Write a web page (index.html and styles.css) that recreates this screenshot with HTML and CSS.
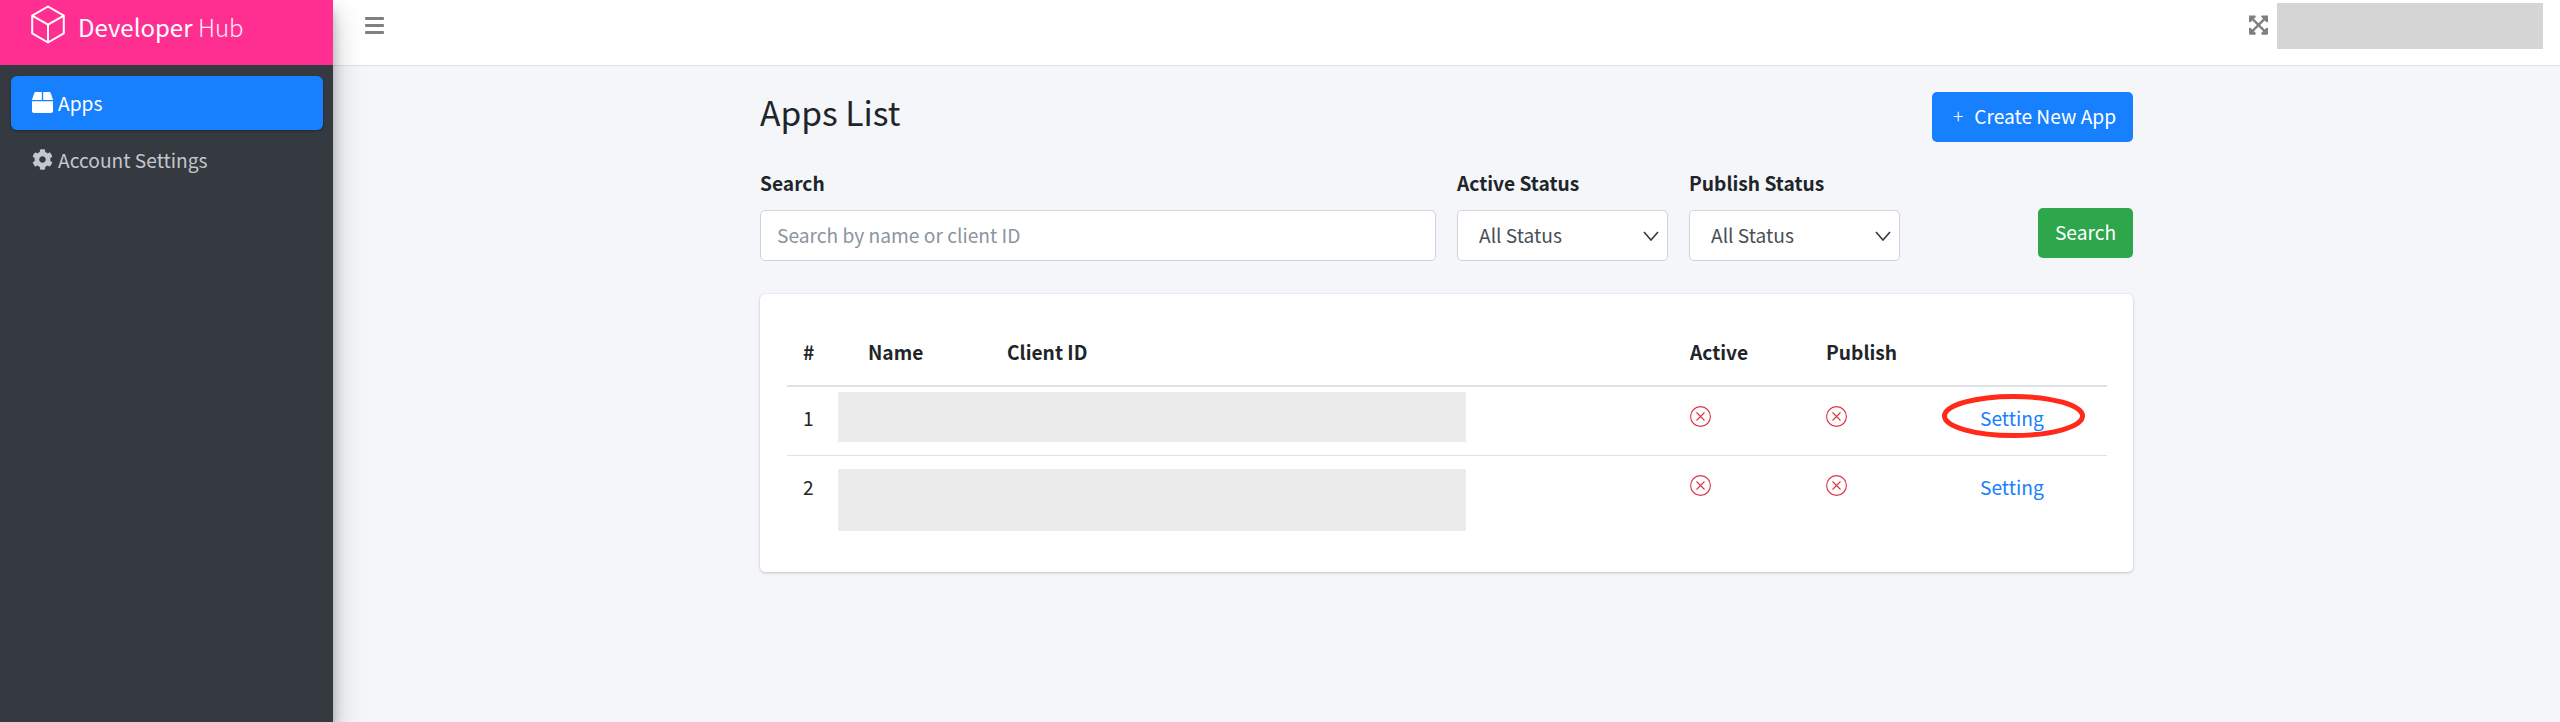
FILE: index.html
```html
<!DOCTYPE html>
<html lang="en">
<head>
<meta charset="utf-8">
<title>Developer Hub</title>
<link rel="stylesheet" href="styles.css">
</head>
<body>
<div class="app">
  <aside class="sidebar">
    <div class="brand">
      <svg class="brand-icon" viewBox="0 0 34 39" fill="none" stroke="#fff" stroke-width="2" stroke-linejoin="round"><path d="M17 1.5 32.8 10.6V28.4L17 37.5 1.2 28.4V10.6Z"/><path d="M1.2 10.6 17 19.6 32.8 10.6M17 19.6V37.5"/></svg>
      <span class="brand-text"><span class="brand-strong">Developer</span> <span class="brand-light">Hub</span></span>
    </div>
    <nav class="nav">
      <a class="nav-item active">
        <svg class="nav-icon" viewBox="0 0 512 512" fill="currentColor"><path d="M509.5 184.6L458.9 32.8C452.4 13.2 434.1 0 413.4 0H272v192h238.7c-.4-2.5-.4-5-1.2-7.4zM240 0H98.6c-20.7 0-39 13.2-45.5 32.8L2.5 184.6c-.8 2.4-.8 4.9-1.2 7.4H240V0zM0 224v240c0 26.5 21.5 48 48 48h416c26.5 0 48-21.5 48-48V224H0z"/></svg>
        <span>Apps</span>
      </a>
      <a class="nav-item">
        <svg class="nav-icon" viewBox="0 0 512 512" fill="currentColor"><path d="M487.4 315.7l-42.6-24.6c4.3-23.2 4.3-47 0-70.2l42.6-24.6c4.9-2.8 7.1-8.6 5.5-14-11.1-35.6-30-67.8-54.7-94.6-3.8-4.1-10-5.1-14.8-2.3L380.8 110c-17.9-15.4-38.5-27.3-60.8-35.1V25.8c0-5.6-3.9-10.5-9.4-11.7-36.7-8.2-74.3-7.8-109.2 0-5.5 1.2-9.4 6.1-9.4 11.7V75c-22.2 7.9-42.8 19.8-60.8 35.1L88.7 85.5c-4.9-2.8-11-1.9-14.8 2.3-24.7 26.7-43.6 58.9-54.7 94.6-1.7 5.4.6 11.2 5.5 14L67.3 221c-4.3 23.2-4.3 47 0 70.2l-42.6 24.6c-4.9 2.8-7.1 8.6-5.5 14 11.1 35.6 30 67.8 54.7 94.6 3.8 4.1 10 5.1 14.8 2.3l42.6-24.6c17.9 15.4 38.5 27.3 60.8 35.1v49.2c0 5.6 3.9 10.5 9.4 11.7 36.7 8.2 74.3 7.8 109.2 0 5.5-1.2 9.4-6.1 9.4-11.7v-49.2c22.2-7.9 42.8-19.8 60.8-35.1l42.6 24.6c4.9 2.8 11 1.9 14.8-2.3 24.7-26.7 43.6-58.9 54.7-94.6 1.5-5.5-.7-11.3-5.6-14.1zM256 336c-44.1 0-80-35.9-80-80s35.9-80 80-80 80 35.9 80 80-35.9 80-80 80z"/></svg>
        <span>Account Settings</span>
      </a>
    </nav>
  </aside>
  <div class="main">
    <header class="topbar">
      <svg class="burger" viewBox="0 0 19 17" fill="#808080"><rect x="0" y="0" width="19" height="3" rx="1"/><rect x="0" y="7" width="19" height="3" rx="1"/><rect x="0" y="14" width="19" height="3" rx="1"/></svg>
      <div class="topbar-right">
        <svg class="expand" viewBox="0 0 448 512" fill="#808080" preserveAspectRatio="none"><path d="M448 344v112a23.94 23.94 0 0 1-24 24H312c-21.39 0-32.09-25.9-17-41l36.2-36.2L224 295.6 116.77 402.9 153 439c15.09 15.1 4.39 41-17 41H24a23.94 23.94 0 0 1-24-24V344c0-21.4 25.89-32.1 41-17l36.19 36.2L184.46 256 77.18 148.7 41 185c-15.1 15.1-41 4.4-41-17V56a23.94 23.94 0 0 1 24-24h112c21.39 0 32.09 25.9 17 41l-36.2 36.2L224 216.4l107.23-107.3L295 73c-15.09-15.1-4.39-41 17-41h112a23.94 23.94 0 0 1 24 24v112c0 21.4-25.89 32.1-41 17l-36.19-36.2L263.54 256l107.28 107.3L407 327.1c15.1-15.2 41-4.5 41 16.9z"/></svg>
        <div class="user-mask"></div>
      </div>
    </header>
    <main class="content">
      <div class="container">
        <div class="title-row">
          <h1 class="title">Apps List</h1>
          <a class="btn btn-primary"><span class="plus">+</span>Create New App</a>
        </div>
        <form class="filters">
          <div class="field field-search">
            <label class="label">Search</label>
            <input class="control" type="text" placeholder="Search by name or client ID">
          </div>
          <div class="field field-select">
            <label class="label">Active Status</label>
            <select class="control select"><option>All Status</option></select>
          </div>
          <div class="field field-select">
            <label class="label">Publish Status</label>
            <select class="control select"><option>All Status</option></select>
          </div>
          <a class="btn btn-success">Search</a>
        </form>
        <section class="card">
          <table class="table">
            <colgroup>
              <col class="c-num"><col class="c-name"><col class="c-client"><col class="c-active"><col class="c-publish"><col class="c-action">
            </colgroup>
            <thead>
              <tr><th>#</th><th class="th-name">Name</th><th>Client ID</th><th>Active</th><th>Publish</th><th></th></tr>
            </thead>
            <tbody>
              <tr>
                <td>1</td>
                <td colspan="2" class="mask-cell"><div class="mask mask-a"></div></td>
                <td><svg class="x-icon" viewBox="0 0 21 21" fill="none" stroke="#dc3545" stroke-width="1.1"><circle cx="10.5" cy="10.5" r="9.9"/><path d="M6.5 6.5 14.5 14.5M14.5 6.5 6.5 14.5"/></svg></td>
                <td><svg class="x-icon" viewBox="0 0 21 21" fill="none" stroke="#dc3545" stroke-width="1.1"><circle cx="10.5" cy="10.5" r="9.9"/><path d="M6.5 6.5 14.5 14.5M14.5 6.5 6.5 14.5"/></svg></td>
                <td><span class="setting">Setting<svg class="circle-mark" viewBox="0 0 143 44" fill="none" stroke="#ff2a1a" stroke-width="5"><ellipse cx="71.5" cy="22" rx="69" ry="19.5"/></svg></span></td>
              </tr>
              <tr>
                <td>2</td>
                <td colspan="2" class="mask-cell second"><div class="mask mask-b"></div></td>
                <td><svg class="x-icon" viewBox="0 0 21 21" fill="none" stroke="#dc3545" stroke-width="1.1"><circle cx="10.5" cy="10.5" r="9.9"/><path d="M6.5 6.5 14.5 14.5M14.5 6.5 6.5 14.5"/></svg></td>
                <td><svg class="x-icon" viewBox="0 0 21 21" fill="none" stroke="#dc3545" stroke-width="1.1"><circle cx="10.5" cy="10.5" r="9.9"/><path d="M6.5 6.5 14.5 14.5M14.5 6.5 6.5 14.5"/></svg></td>
                <td><span class="setting">Setting</span></td>
              </tr>
            </tbody>
          </table>
        </section>
      </div>
    </main>
  </div>
</div>
</body>
</html>
```
FILE: styles.css
```css
* { box-sizing: border-box; }
html, body { margin: 0; height: 100%; }
body {
  font-family: "Noto Sans CJK JP", "Noto Sans", sans-serif;
  font-size: 19.2px;
  line-height: 30px;
  color: #212529;
  background: #f4f6f9;
  overflow: hidden;
}
.app { display: flex; height: 722px; }

.sidebar {
  width: 333px;
  flex: none;
  background: #343a40;
  box-shadow: 0 14px 28px rgba(0,0,0,.25), 0 10px 10px rgba(0,0,0,.22);
  position: relative;
  z-index: 2;
}
.brand {
  height: 65px;
  background: #ff2f92;
  display: flex;
  padding: 5px 0 0 31px;
  color: #fff;
}
.brand-icon { width: 34px; height: 39px; flex: none; }
.brand-text { margin-left: 13px; font-size: 24px; line-height: 44px; }
.brand-light { font-weight: 300; opacity: .9; }
.nav { padding: 11px 10px 0 11px; }
.nav-item {
  display: flex;
  align-items: center;
  height: 54px;
  padding-left: 21px;
  padding-bottom: 1px;
  border-radius: 6px;
  color: #c2c7d0;
  margin-bottom: 3px;
}
.nav-item.active {
  background: #1780ff;
  color: #fff;
  box-shadow: 0 1px 3px rgba(0,0,0,.3);
}
.nav-icon { width: 21px; height: 21px; flex: none; margin-right: 5px; }

.main { flex: 1; min-width: 0; display: flex; flex-direction: column; }
.topbar {
  height: 66px;
  flex: none;
  background: #fff;
  border-bottom: 1px solid #dee2e6;
  display: flex;
  justify-content: space-between;
  padding: 3px 17px 0 32px;
}
.burger { width: 19px; height: 17px; margin-top: 14px; }
.topbar-right { display: flex; }
.expand { width: 19px; height: 22px; margin: 11px 9px 0 0; }
.user-mask { width: 266px; height: 46px; background: #d5d5d5; }

.content { flex: 1; }
.container { width: 1373px; margin: 0 auto; }
.title-row {
  display: flex;
  justify-content: space-between;
  padding-top: 21px;
  height: 103px;
}
.title { margin: 0; font-size: 33.6px; font-weight: 400; line-height: 50px; }
.btn {
  display: flex;
  align-items: center;
  justify-content: center;
  height: 50px;
  padding-bottom: 2px;
  border-radius: 5px;
  color: #fff;
}
.btn-primary { width: 201px; background: #1780ff; margin-top: 5px; padding-left: 4px; }
.plus { font-weight: 300; margin-right: 11px; }
.btn-success { width: 95px; background: #2ea64c; margin-left: auto; margin-top: 39px; }

.filters { display: flex; gap: 21px; align-items: flex-start; }
.field { display: flex; flex-direction: column; }
.field-search { width: 676px; }
.field-select { width: 211px; }
.label { font-weight: 700; height: 41px; line-height: 28px; }
.control {
  height: 51px;
  border: 1px solid #ced4da;
  border-radius: 5px;
  background-color: #fff;
  font: inherit;
  color: #495057;
  padding: 0 16px 2px;
  outline: none;
}
.control::placeholder { color: #8c959d; opacity: 1; }
.select {
  appearance: none;
  padding-left: 21px;
  background-image: url("data:image/svg+xml,%3Csvg xmlns='http://www.w3.org/2000/svg' viewBox='0 0 16 10'%3E%3Cpath d='M1 1l7 8 7-8' fill='none' stroke='%23343a40' stroke-width='1.6'/%3E%3C/svg%3E");
  background-repeat: no-repeat;
  background-size: 16px 10px;
  background-position: right 8px center;
}

.card {
  margin-top: 33px;
  background: #fff;
  border-radius: 5px;
  box-shadow: 0 0 1px rgba(0,0,0,.125), 0 1px 3px rgba(0,0,0,.2);
  padding: 26px 26px 26px 27px;
  height: 278px;
}
.table { width: 1320px; border-collapse: collapse; table-layout: fixed; }
.c-num { width: 51px; }
.c-name { width: 153px; }
.c-client { width: 683px; }
.c-active { width: 136px; }
.c-publish { width: 154px; }
th {
  text-align: left;
  font-weight: 700;
  height: 66px;
  padding: 0 16px 1px;
  border-bottom: 2px solid #dee2e6;
  vertical-align: middle;
}
.th-name { padding-left: 30px; }
td {
  height: 69px;
  padding: 16px 16px 0;
  vertical-align: top;
  border-bottom: 1px solid #dee2e6;
}
tbody tr:last-child td { border-bottom: 0; height: 90px; }
td.mask-cell { padding: 5px 0 0; }
td.mask-cell.second { padding-top: 13px; }
.mask { background: #ebebeb; width: 628px; }
.mask-a { height: 50px; }
.mask-b { height: 62px; }
.x-icon { width: 21px; height: 21px; display: block; margin-top: 3px; }
.setting { color: #1780ff; position: relative; display: inline-block; }
.circle-mark {
  position: absolute;
  left: -38px;
  top: -9px;
  width: 143px;
  height: 44px;
  overflow: visible;
}
```
